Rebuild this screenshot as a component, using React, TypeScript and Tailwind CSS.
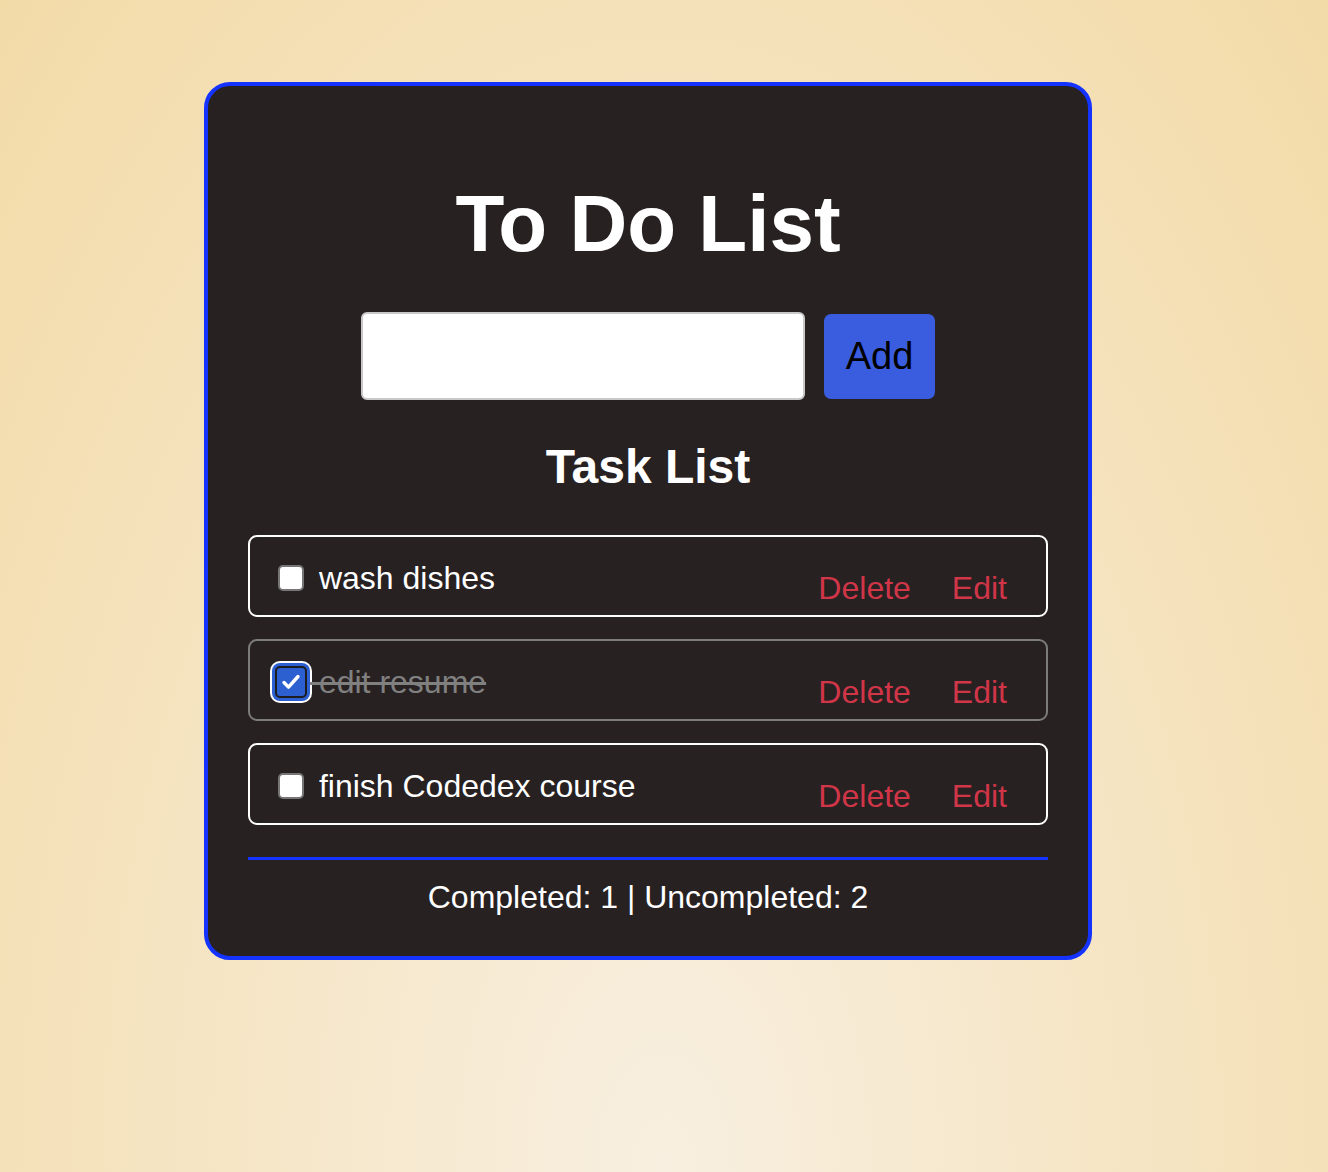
import { useState } from 'react';

type Task = { id: number; text: string; done: boolean };

const initialTasks: Task[] = [
  { id: 1, text: 'wash dishes', done: false },
  { id: 2, text: 'edit resume', done: true },
  { id: 3, text: 'finish Codedex course', done: false },
];

function CheckBox({ checked, onToggle }: { checked: boolean; onToggle: () => void }) {
  if (checked) {
    return (
      <button
        onClick={onToggle}
        aria-label="Mark as not done"
        className="-m-[3px] flex h-[32px] w-[32px] shrink-0 items-center justify-center rounded-[5px] border-2 border-[#1d1d1f] bg-[#2c5fd0] shadow-[0_0_0_3px_#2c5fd0,0_0_0_5px_#ffffff]"
      >
        <svg width="20" height="20" viewBox="0 0 20 20" fill="none">
          <path d="M3 10.5l4.5 4.6L17 4.5" stroke="#fff" strokeWidth="3.4" strokeLinecap="round" strokeLinejoin="round" />
        </svg>
      </button>
    );
  }
  return (
    <button
      onClick={onToggle}
      aria-label="Mark as done"
      className="h-[26px] w-[26px] shrink-0 rounded-[5px] border-2 border-[#767676] bg-white"
    />
  );
}

export default function App() {
  const [tasks, setTasks] = useState<Task[]>(initialTasks);
  const [draft, setDraft] = useState('');

  const completed = tasks.filter((t) => t.done).length;

  const addTask = () => {
    if (!draft.trim()) return;
    setTasks((prev) => [...prev, { id: Date.now(), text: draft.trim(), done: false }]);
    setDraft('');
  };

  return (
    <div className="min-h-[1172px] w-full bg-[radial-gradient(ellipse_at_50%_100%,#f8efe0_0%,#f3dba8_100%)] pl-[204px] pt-[82px] font-['Liberation_Sans',Arial,sans-serif]">
      <div className="w-[888px] rounded-[26px] border-4 border-[#1533ff] bg-[#272122] px-[40px] pb-[41px] pt-[93px]">
        <h1 className="text-center text-[80px] font-bold leading-[90px] text-white">To Do List</h1>

        {/* New task input */}
        <div className="mt-[43px] flex items-center justify-center gap-[19px]">
          <input
            value={draft}
            onChange={(e) => setDraft(e.target.value)}
            className="h-[88px] w-[444px] rounded-[6px] border-2 border-[#c9c9c9] bg-white px-3 text-[32px] text-black outline-none"
          />
          <button
            onClick={addTask}
            className="h-[85px] w-[111px] rounded-[7px] bg-[#3a5de0] text-[38px] leading-none text-black"
          >
            Add
          </button>
        </div>

        <h2 className="mt-[40px] text-center text-[48px] font-bold leading-[54px] text-white">Task List</h2>

        <ul className="mt-[41px] flex flex-col gap-[22px]">
          {tasks.map((task) => (
            <li
              key={task.id}
              className={`flex h-[82px] items-center justify-between rounded-[9px] border-2 pl-[28px] pr-[39px] pt-[4px] ${
                task.done ? 'border-[#7c7c7c]' : 'border-white'
              }`}
            >
              <div className="flex items-center">
                <CheckBox
                  checked={task.done}
                  onToggle={() =>
                    setTasks((prev) => prev.map((t) => (t.id === task.id ? { ...t, done: !t.done } : t)))
                  }
                />
                <span
                  className={`ml-[6px] text-[32px] leading-[36px] ${
                    task.done ? 'text-[#808080] line-through decoration-[#808080]' : 'text-white'
                  }`}
                >
                  {'\u00a0' + task.text}
                </span>
              </div>
              <div className="mt-[20px] flex items-center gap-[41px] text-[32px] leading-[36px] text-[#d13548]">
                <button onClick={() => setTasks((prev) => prev.filter((t) => t.id !== task.id))}>Delete</button>
                <button>Edit</button>
              </div>
            </li>
          ))}
        </ul>

        <div className="mt-[32px] h-[3px] bg-[#1533ff]" />
        <p className="mt-[19px] text-center text-[32px] leading-[36px] text-white">
          Completed: {completed} | Uncompleted: {tasks.length - completed}
        </p>
      </div>
    </div>
  );
}
